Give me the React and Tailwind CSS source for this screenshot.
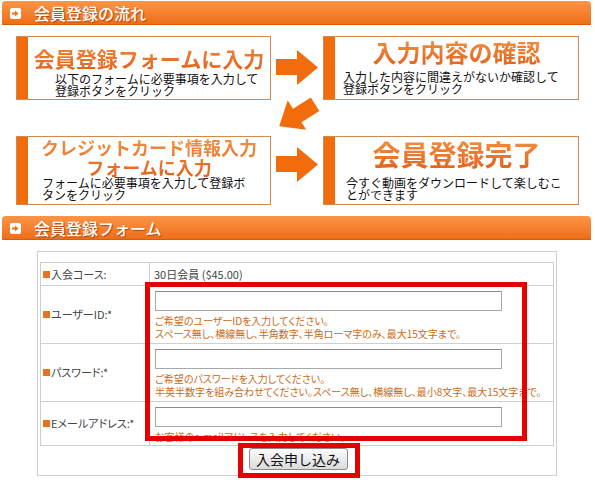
import React from "react";

function RightArrow() {
  return (
    <svg width="42" height="35" viewBox="0 0 42 35">
      <polygon points="0,9 21,9 21,0 42,17.5 21,35 21,25 0,25" fill="#f26c0c" />
    </svg>
  );
}

function DiagArrow() {
  return (
    <svg width="60" height="50" viewBox="0 0 60 50" className="overflow-visible">
      <g transform="translate(30 25) rotate(148) translate(-21 -17.5)">
        <polygon points="0,9 21,9 21,0 42,17.5 21,35 21,25 0,25" fill="#f26c0c" />
      </g>
    </svg>
  );
}

function Header({ title }) {
  return (
    <div className="ml-[2px] w-[589px] h-[24px] rounded-t-[4px] bg-linear-to-b from-[#fb9545] to-[#ee6c12] flex items-center pl-[8px] shadow-[inset_0_-1px_0_#d85d08]">
      <div className="w-[11px] h-[11px] rounded-[2px] bg-white flex items-center justify-center">
        <svg width="7" height="7" viewBox="0 0 7 7">
          <polygon points="0,2.5 3,2.5 3,0.5 6.5,3.5 3,6.5 3,4.5 0,4.5" fill="#f07018" />
        </svg>
      </div>
      <span className="ml-[13px] text-white text-[16px] leading-[20px] font-medium [text-shadow:1px_1px_1px_rgba(120,40,0,0.6)]">
        {title}
      </span>
    </div>
  );
}

const titleCls =
  "font-bold bg-linear-to-b from-[#f39143] to-[#e4631a] bg-clip-text text-transparent text-center";

function Box({ children }) {
  return (
    <div className="h-full flex border border-[#cf8a52] bg-white">
      <div className="w-[11px] bg-[#f26c0c] shrink-0" />
      <div className="flex-1 flex flex-col">{children}</div>
    </div>
  );
}

function Row({ label, h, children }) {
  return (
    <div className="flex border-b border-[#cfcfcf]" style={{ height: h }}>
      <div className="w-[109px] shrink-0 border-r border-[#cfcfcf] flex items-center pl-[2px] gap-[1px]">
        <span className="w-[7px] h-[7px] bg-[#e8731e] inline-block" />
        <span className="text-[11px] text-[#444] [font-feature-settings:'palt']">{label}</span>
      </div>
      <div className="flex-1 pl-[5px]">{children}</div>
    </div>
  );
}

function Field({ lines }) {
  return (
    <div className="pt-[5px]">
      <div className="w-[347px] h-[20px] border border-[#a8a8a8] border-t-[#8c8c8c] bg-white" />
      <div className="mt-[3px] text-[10px] leading-[13px] text-[#cc6a14] whitespace-nowrap [font-feature-settings:'palt']">
        {lines.map((l, i) => (
          <div key={i}>{l}</div>
        ))}
      </div>
    </div>
  );
}

const subCls = "text-[12px] leading-[12px] text-[#111]";

export default function App() {
  return (
    <div className="w-[595px] h-[480px] bg-white overflow-hidden font-['Noto_Sans_CJK_JP',sans-serif] pt-[1px]">
      <Header title="会員登録の流れ" />

      <div className="mt-[11px] ml-[16px] grid grid-cols-[255px_52px_256px] grid-rows-[64px_36px_69px]">
        <Box>
          <div className={`${titleCls} text-[21px] leading-[24px] pt-[9px]`}>会員登録フォームに入力</div>
          <div className={`mt-[3px] pl-[27px] ${subCls}`}>
            以下のフォームに必要事項を入力して
            <br />
            登録ボタンをクリック
          </div>
        </Box>
        <div className="flex justify-center pt-[14px]">
          <RightArrow />
        </div>
        <Box>
          <div className={`${titleCls} text-[24px] leading-[28px] pt-[1px]`}>入力内容の確認</div>
          <div className={`mt-[5px] pl-[8px] ${subCls}`}>
            入力した内容に間違えがないか確認して
            <br />
            登録ボタンをクリック
          </div>
        </Box>

        <div />
        <div className="flex justify-center items-center -mt-[6px]">
          <DiagArrow />
        </div>
        <div />

        <Box>
          <div className={`${titleCls} text-[18px] leading-[20px]`}>
            クレジットカード情報入力
            <br />
            フォームに入力
          </div>
          <div className={`pl-[14px] ${subCls}`}>
            フォームに必要事項を入力して登録ボ
            <br />
            タンをクリック
          </div>
        </Box>
        <div className="flex justify-center pt-[11px]">
          <RightArrow />
        </div>
        <Box>
          <div className={`${titleCls} text-[28px] leading-[32px] pt-[1px]`}>会員登録完了</div>
          <div className={`mt-[7px] pl-[11px] ${subCls}`}>
            今すぐ動画をダウンロードして楽しむこ
            <br />
            とができます
          </div>
        </Box>
      </div>

      <div className="mt-[11px]">
        <Header title="会員登録フォーム" />
      </div>

      <div className="relative mt-[11px] ml-[37px] w-[520px] h-[225px] border border-[#cfcfcf] pt-[10px] pl-[2px]">
        <div className="w-[514px] border border-b-0 border-[#cfcfcf]">
          <Row label="入会コース:" h={23}>
            <div className="h-full flex items-center -ml-[1px] text-[11px] text-[#444] [font-feature-settings:'palt']">
              30日会員 ($45.00)
            </div>
          </Row>
          <Row label="ユーザーID:*" h={58}>
            <Field
              lines={[
                "ご希望のユーザーIDを入力してください。",
                "スペース無し、横線無し、半角数字、半角ローマ字のみ、最大15文字まで。",
              ]}
            />
          </Row>
          <Row label="パスワード:*" h={58}>
            <Field
              lines={[
                "ご希望のパスワードを入力してください。",
                "半英半数字を組み合わせてください。スペース無し、横線無し、最小8文字、最大15文字まで。",
              ]}
            />
          </Row>
          <Row label="Eメールアドレス:*" h={44}>
            <Field lines={["お客様のe-mailアドレスを入力してください。"]} />
          </Row>
        </div>
        <div className="flex justify-center pt-[2px]">
          <button className="w-[99px] h-[22px] rounded-[3px] border border-[#8a8a8a] bg-linear-to-b from-[#fbfbfb] to-[#dcdcdc] text-[14px] leading-[20px] text-[#111]">
            入会申し込み
          </button>
        </div>

        <div className="absolute left-[107px] top-[30px] w-[382px] h-[159px] border-[5px] border-[#e60000] pointer-events-none" />
        <div className="absolute left-[200px] top-[191px] w-[122px] h-[35px] border-[5px] border-[#e60000] pointer-events-none" />
      </div>
    </div>
  );
}
